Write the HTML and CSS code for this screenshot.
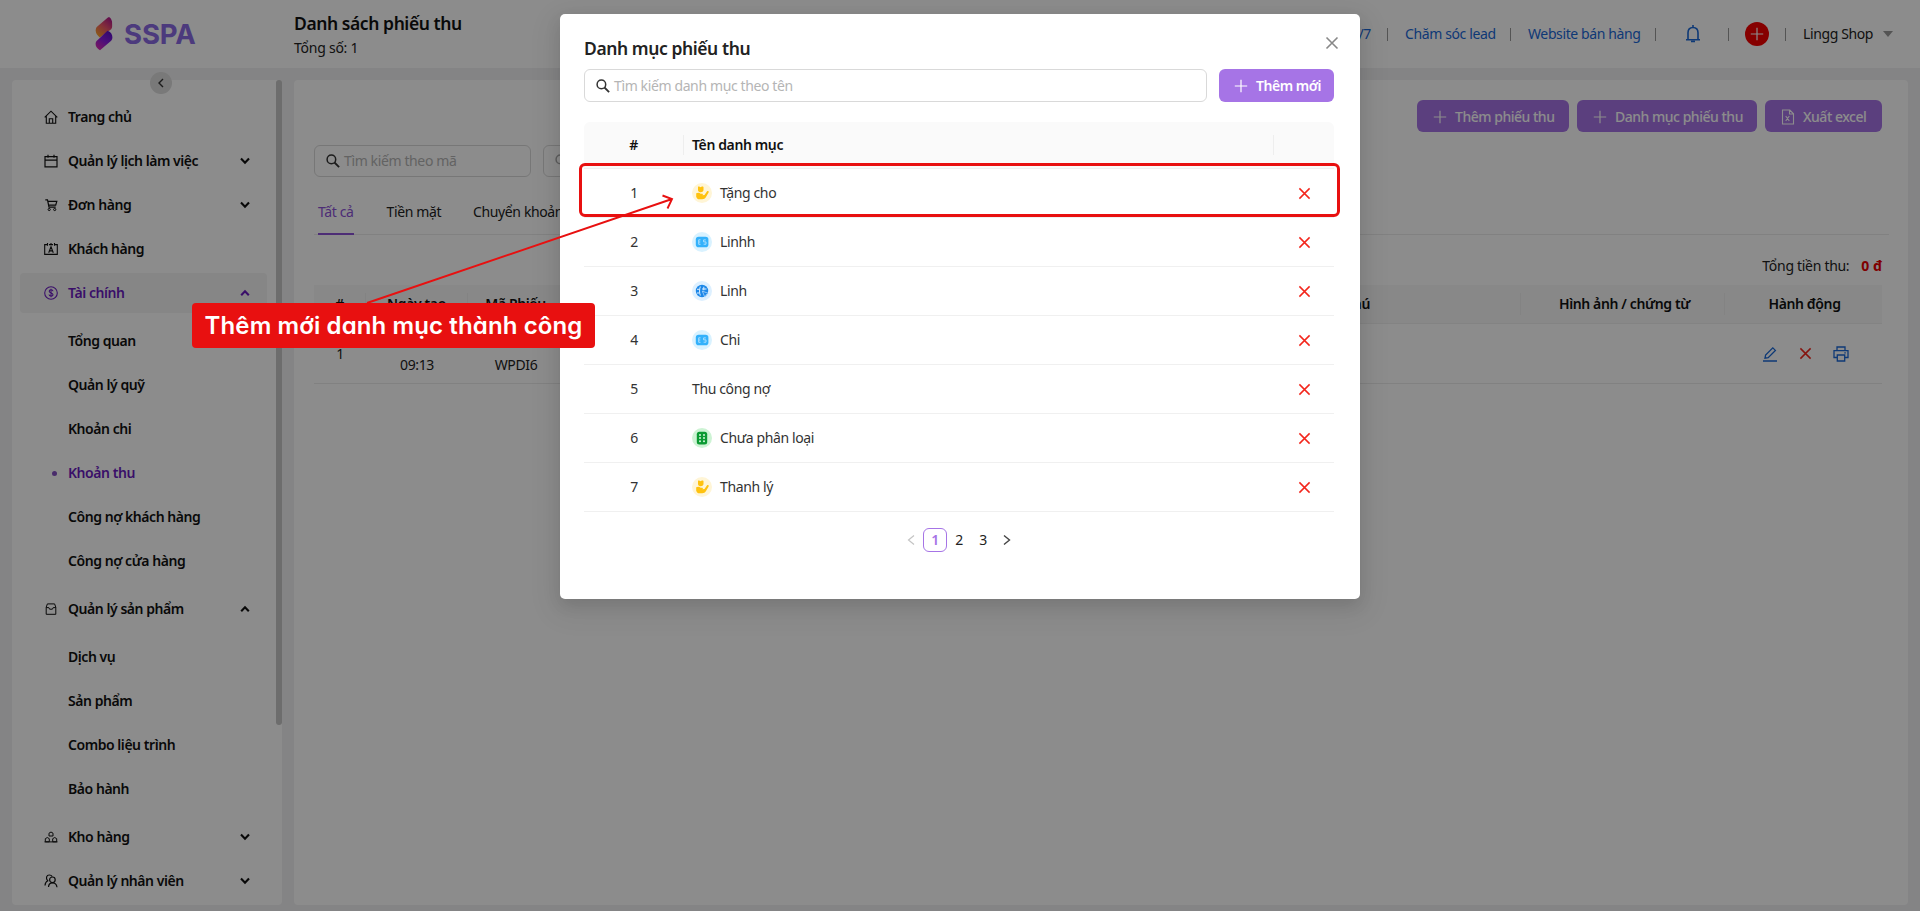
FILE: index.html
```html
<!DOCTYPE html>
<html lang="vi">
<head>
<meta charset="utf-8">
<title>Danh sách phiếu thu</title>
<link rel="stylesheet" href="styles.css">
</head>
<body>
<svg class="defs" width="0" height="0">
  <defs>
    <linearGradient id="g1" x1="0.8" y1="0" x2="0.1" y2="1"><stop offset="0" stop-color="#b0188c"/><stop offset=".45" stop-color="#f0566a"/><stop offset="1" stop-color="#ffae20"/></linearGradient>
    <linearGradient id="g2" x1="0.8" y1="0" x2="0.2" y2="1"><stop offset="0" stop-color="#5a10c8"/><stop offset=".5" stop-color="#8a1be0"/><stop offset="1" stop-color="#e02bb0"/></linearGradient>
  </defs>
  <symbol id="down" viewBox="0 0 10 10"><path d="M1 2.500 5 6.700 9 2.500" fill="none" stroke="currentColor" stroke-width="2.100"/></symbol>
  <symbol id="up" viewBox="0 0 10 10"><path d="M1.200 7.300 5 3.300 8.800 7.300" fill="none" stroke="currentColor" stroke-width="2.100"/></symbol>
  <symbol id="plus" viewBox="0 0 14 14"><path d="M7 .8v12.400M.8 7h12.400" fill="none" stroke="currentColor" stroke-width="1.200"/></symbol>
  <symbol id="x" viewBox="0 0 14 14"><path d="M1.500 1.500l11 11M12.500 1.500l-11 11" fill="none" stroke="currentColor" stroke-width="1.600"/></symbol>
  <symbol id="search" viewBox="0 0 14 14"><circle cx="5.400" cy="5.400" r="4.300" fill="none" stroke="currentColor" stroke-width="1.500"/><path d="M8.500 8.500l4.600 4.600" stroke="currentColor" stroke-width="1.800"/></symbol>
  <symbol id="gift" viewBox="0 0 20 20"><circle cx="10" cy="10" r="10" fill="#fff5d6"/><path d="M6 3.800c.8-.6 1.700-.4 2.500.5.900-.9 2-1.100 3-.4v3.400c-.4 1.300-1.300 2-2.700 2S6.300 8.600 6 7.200z" fill="#ffc20e"/><path d="M4.200 10.300c1.800-1.200 3.400-.6 4.400.4l1.700.1c.8.200.8 1.200 0 1.400l2.200-.3 2.400-3.500c.9-1 2.300-.1 1.700 1.100l-2.600 4.600c-.9 1.500-2.100 2.200-3.800 2.200H7.600c-1.800 0-2.900-1-3.400-2.600z" fill="#ffc20e"/></symbol>
  <symbol id="cash" viewBox="0 0 20 20"><circle cx="10" cy="10" r="10" fill="#d9f2ff"/><rect x="3.800" y="4.800" width="12.600" height="10.400" rx="2.800" fill="#33b1fb"/><path d="M8.500 7.800H6.700v4.500h1.800M6.700 10h1.600M13.800 7.900h-2.200v2H14v2.300h-2.400" fill="none" stroke="#b4e3ff" stroke-width=".9"/></symbol>
  <symbol id="globe" viewBox="0 0 20 20"><circle cx="10" cy="10" r="10" fill="#ddf0ff"/><circle cx="10" cy="10" r="6.200" fill="#1c87e8"/><path d="M8.300 5.500c-1 3-1 6 0 9M5 8.300h2.500M5 12h2.500M11.800 5.800v3.500M10 8h4.500" fill="none" stroke="#ddf0ff" stroke-width="1"/><path d="M10.300 10.100l6.400 2.400-2.600 1.200-1.100 2.900z" fill="#1c87e8" stroke="#ddf0ff" stroke-width=".6"/></symbol>
  <symbol id="dice" viewBox="0 0 20 20"><circle cx="10" cy="10" r="10" fill="#cdf3d4"/><rect x="4.800" y="3.800" width="10.400" height="12.600" rx="2.500" fill="#0a9a32"/><g fill="#d0f5d8"><circle cx="8" cy="7" r="1"/><circle cx="12" cy="7" r="1"/><circle cx="8" cy="10.100" r="1"/><circle cx="12" cy="10.100" r="1"/><circle cx="8" cy="13.200" r="1"/><circle cx="12" cy="13.200" r="1"/></g></symbol>
</svg>

<header class="header">
  <div class="logo">
    <svg width="18" height="34" viewBox="0 0 18 34"><path d="M2.300 9.600 12.600.8c1.500-1 2.600-.2 3.400 1.100.8 1.300 1.100 2.400 1.100 4.300v3.200c0 1.400-.5 2.400-1.600 3.400L4.700 20.600C2.300 18.400.7 16.400.7 13.600c0-1.700.5-2.900 1.600-4z" fill="url(#g1)"/><path d="M12.500 13.800c3.200 1.200 4.900 3.500 4.900 6.500 0 1.700-.6 2.900-1.800 4L5 33.300C2.400 31.600.6 29.800.6 27c0-1.700.5-2.700 1.800-3.800z" fill="url(#g2)"/></svg>
    <span>SSPA</span>
  </div>
  <div class="heading">
    <div class="title">Danh sách phiếu thu</div>
    <div class="subtitle">Tổng số: 1</div>
  </div>
  <nav class="topnav">
    <a class="n1">Hỗ trợ 24/7</a><i></i><a class="n2">Chăm sóc lead</a><i></i><a class="n3">Website bán hàng</a><i></i>
    <span class="bell"><svg width="16" height="20" viewBox="0 0 16 20"><path d="M8 1v2M3 15.500V8.800C3 5.600 5 3.500 8 3.500s5 2.100 5 5.300v6.700M1 15.700h14M6 17.500h4" fill="none" stroke="#1a68d8" stroke-width="1.600"/></svg></span><i></i>
    <span class="add"><svg width="14" height="14"><use href="#plus"/></svg></span><i></i>
    <span class="shop">Lingg Shop</span><b class="caret"></b>
  </nav>
</header>

<div class="body">
  <aside class="sidebar">
    <span class="collapse"><svg width="8" height="10" viewBox="0 0 8 10"><path d="M6 1 2 5l4 4" fill="none" stroke="#333" stroke-width="1.400"/></svg></span>
    <ul class="menu">
      <li><svg class="mi" viewBox="0 0 14 14"><path d="M.7 7.300 7 1.200l6.300 6.100M2.300 6.300v6.900h9.400V6.300M5.300 13V8.700h3.400V13" fill="none" stroke="currentColor" stroke-width="1.100"/></svg><span>Trang chủ</span></li>
      <li><svg class="mi" viewBox="0 0 14 14"><path d="M1 2.600h12v10.200H1zM1 6.100h12M4 .8v3M10 .8v3" fill="none" stroke="currentColor" stroke-width="1.200"/></svg><span>Quản lý lịch làm việc</span><svg class="ar"><use href="#down"/></svg></li>
      <li><svg class="mi" viewBox="0 0 14 14"><path d="M1.300 1.800h2.200l1.500 7.400h6.700M3.700 3.400h9.100l-1.100 3.800H4.500" fill="none" stroke="currentColor" stroke-width="1.200"/><circle cx="5.200" cy="11.500" r="1.100" fill="none" stroke="currentColor"/><circle cx="10.700" cy="11.500" r="1.100" fill="none" stroke="currentColor"/></svg><span>Đơn hàng</span><svg class="ar"><use href="#down"/></svg></li>
      <li><svg class="mi" viewBox="0 0 14 14"><path d="M3.500 2.600H.7v9.800h12.600V2.600h-2.800M5 2.600h4M3.500 1v2.800M7 1v2M10.500 1v2.800M4.700 10.700 7 4.800l2.300 5.900M5.400 8.900h3.200" fill="none" stroke="currentColor" stroke-width="1.100"/></svg><span>Khách hàng</span></li>
      <li class="open"><svg class="mi" viewBox="0 0 14 14"><circle cx="7" cy="7" r="6.300" fill="none" stroke="currentColor" stroke-width="1.100"/><path d="M9 5.300C8.800 3.200 5.200 3.300 5.200 5.300S9 6.800 9 8.700s-3.800 2-4-.2M7 2.800v8.400" fill="none" stroke="currentColor" stroke-width="1.100"/></svg><span>Tài chính</span><svg class="ar"><use href="#up"/></svg></li>
    </ul>
    <ul class="menu sub">
      <li><span>Tổng quan</span></li>
      <li><span>Quản lý quỹ</span></li>
      <li><span>Khoản chi</span></li>
      <li class="active"><em></em><span>Khoản thu</span></li>
      <li><span>Công nợ khách hàng</span></li>
      <li><span>Công nợ cửa hàng</span></li>
    </ul>
    <ul class="menu">
      <li><svg class="mi" viewBox="0 0 14 14"><path d="M2.200 5.200V12.300h9.600V5.200L10.600 1.900H3.400zM2.200 5.600h2.600l.8 1.600h2.800l.8-1.600h2.600" fill="none" stroke="currentColor" stroke-width="1"/></svg><span>Quản lý sản phẩm</span><svg class="ar"><use href="#up"/></svg></li>
    </ul>
    <ul class="menu sub">
      <li><span>Dịch vụ</span></li>
      <li><span>Sản phẩm</span></li>
      <li><span>Combo liệu trình</span></li>
      <li><span>Bảo hành</span></li>
    </ul>
    <ul class="menu">
      <li><svg class="mi" viewBox="0 0 14 14"><path d="M5 6V3.200l2-1.200 2 1.200V6zM1.300 11.800V8.700l2-1.200 2 1.200v3.100zM8.700 11.800V8.700l2-1.200 2 1.200v3.100zM.5 11.900h13" fill="none" stroke="currentColor" stroke-width="1"/></svg><span>Kho hàng</span><svg class="ar"><use href="#down"/></svg></li>
      <li><svg class="mi" viewBox="0 0 14 14"><path d="M1 11.500C1.200 9 2.100 7.500 3.800 6.800 1.200 4 2.700 1 5.300 1c1.400 0 2.300.5 2.900 1.500M4.500 13c.1-2.500 1.400-4 3.800-4.200s4.400 1.700 4.700 4.400" fill="none" stroke="currentColor" stroke-width="1.200"/><circle cx="8.400" cy="5.800" r="2.800" fill="none" stroke="currentColor" stroke-width="1.200"/></svg><span>Quản lý nhân viên</span><svg class="ar"><use href="#down"/></svg></li>
    </ul>
    <span class="scroll"></span>
  </aside>

  <main class="main">
    <div class="actions">
      <button class="btn b1"><svg width="14" height="14"><use href="#plus"/></svg><span>Thêm phiếu thu</span></button>
      <button class="btn b2"><svg width="14" height="14"><use href="#plus"/></svg><span>Danh mục phiếu thu</span></button>
      <button class="btn b3"><svg width="14" height="16" viewBox="0 0 14 16"><path d="M1.500 1h7.300L12.500 4.800V15h-11zM8.500 1v4h4M4.700 7l3.600 5M8.300 7l-3.600 5" fill="none" stroke="currentColor" stroke-width="1.100"/></svg><span>Xuất excel</span></button>
    </div>
    <div class="filters">
      <div class="field"><svg width="14" height="14"><use href="#search"/></svg><span>Tìm kiếm theo mã</span></div>
      <div class="field gray"><svg width="14" height="14"><use href="#search"/></svg></div>
    </div>
    <div class="tabs"><span class="on">Tất cả</span><span>Tiền mặt</span><span>Chuyển khoản</span></div>
    <div class="total">Tổng tiền thu: <strong>0 đ</strong></div>
    <div class="grid head"><div>#</div><div>Ngày tạo</div><div>Mã Phiếu</div><div></div><div>Ghi chú</div><div>Hình ảnh / chứng từ</div><div>Hành động</div></div>
    <div class="grid row"><div>1</div><div>10/10/2024<br>09:13</div><div>PT<br>WPDI6</div><div></div><div></div><div></div>
      <div class="ops">
        <svg width="16" height="16" viewBox="0 0 16 16"><path d="M1 15h14M3 12.200l.6-3.200L10.800 1.800l2.600 2.600-7.200 7.200z" fill="none" stroke="#1a68d8" stroke-width="1.300"/></svg>
        <svg class="red" width="13" height="13"><use href="#x"/></svg>
        <svg width="16" height="16" viewBox="0 0 16 16"><path d="M4 4.500V1h8v3.500M4 11.500H1V4.700h14v6.800h-3M4.300 9h7.400v6H4.300zM11.300 6.800h1.500" fill="none" stroke="#1a68d8" stroke-width="1.300"/></svg>
      </div></div>
  </main>
</div>

<div class="mask">
  <section class="modal">
    <svg class="close" width="14" height="14"><use href="#x"/></svg>
    <h2>Danh mục phiếu thu</h2>
    <div class="tools">
      <div class="field"><svg width="14" height="14"><use href="#search"/></svg><span>Tìm kiếm danh mục theo tên</span></div>
      <button class="btn"><svg width="14" height="14"><use href="#plus"/></svg><span>Thêm mới</span></button>
    </div>
    <div class="list">
      <div class="line lhead"><div>#</div><div>Tên danh mục</div><div></div></div>
      <div class="line"><div>1</div><div><svg class="ic"><use href="#gift"/></svg>Tặng cho</div><div><svg class="red" width="13" height="13"><use href="#x"/></svg></div></div>
      <div class="line"><div>2</div><div><svg class="ic"><use href="#cash"/></svg>Linhh</div><div><svg class="red" width="13" height="13"><use href="#x"/></svg></div></div>
      <div class="line"><div>3</div><div><svg class="ic"><use href="#globe"/></svg>Linh</div><div><svg class="red" width="13" height="13"><use href="#x"/></svg></div></div>
      <div class="line"><div>4</div><div><svg class="ic"><use href="#cash"/></svg>Chi</div><div><svg class="red" width="13" height="13"><use href="#x"/></svg></div></div>
      <div class="line"><div>5</div><div>Thu công nợ</div><div><svg class="red" width="13" height="13"><use href="#x"/></svg></div></div>
      <div class="line"><div>6</div><div><svg class="ic"><use href="#dice"/></svg>Chưa phân loại</div><div><svg class="red" width="13" height="13"><use href="#x"/></svg></div></div>
      <div class="line"><div>7</div><div><svg class="ic"><use href="#gift"/></svg>Thanh lý</div><div><svg class="red" width="13" height="13"><use href="#x"/></svg></div></div>
    </div>
    <div class="pager">
      <span><svg width="8" height="12" viewBox="0 0 8 12"><path d="M7 1.500 1.500 6 7 10.500" fill="none" stroke="#c4c4c4" stroke-width="1.200"/></svg></span><span class="cur">1</span><span>2</span><span>3</span><span><svg width="8" height="12" viewBox="0 0 8 12"><path d="M1 1.500 6.500 6 1 10.500" fill="none" stroke="#444" stroke-width="1.400"/></svg></span>
    </div>
  </section>
</div>

<div class="frame"></div>
<svg class="arrow" width="320" height="120" viewBox="0 0 320 120"><path d="M7 113 312 9M302.500 5.500 312 9l-4.500 9.500" fill="none" stroke="#e81010" stroke-width="1.900"/></svg>
<div class="callout"><span>Thêm mới danh mục thành công</span></div>
</body>
</html>
```
FILE: styles.css
```css
* { box-sizing: border-box; }
body { margin: 0; width: 1920px; height: 911px; overflow: hidden; position: relative; background: #f1f1f2; font: 14px/22px "Noto Sans", "Open Sans", sans-serif; letter-spacing: -0.38px; color: #222; }
ul { list-style: none; margin: 0; padding: 0; }
svg { display: block; flex: none; }
.defs { position: absolute; }

.header { height: 68px; background: #fff; display: flex; align-items: center; }
.logo { width: 294px; padding-left: 95px; display: flex; align-items: center; gap: 11px; font: 700 27.5px/34px Inter, sans-serif; letter-spacing: -0.1px; color: #8a6be4; }
.heading { flex: 1; }
.title { font-size: 17.5px; font-weight: 600; line-height: 26px; letter-spacing: -0.42px; margin-bottom: 1px; color: #111; }
.subtitle { line-height: 22px; letter-spacing: -0.25px; }
.topnav { display: flex; align-items: center; color: #1a68d8; }
.topnav i { width: 1px; height: 13px; background: #999; margin: 0 17px 0 16px; }
.n1, .n2, .n3, .shop { white-space: nowrap; }
.n2 { width: 89px; }
.n3 { width: 111px; }
.bell { width: 39px; display: flex; justify-content: center; }
.add { width: 24px; height: 24px; border-radius: 50%; background: #f50000; color: #fff; display: flex; align-items: center; justify-content: center; }
.topnav .bell + i { margin-right: 16px; }
.topnav .shop { color: #222; width: 69px; }
.caret { border: 5px solid transparent; border-top: 6px solid #999; border-bottom: 0; margin: 0 27px 0 11px; }

.body { display: flex; gap: 12px; padding: 12px; }
.sidebar { width: 270px; height: 825px; background: #fff; border-radius: 4px; position: relative; padding: 17px 15px 0 8px; }
.main { width: 1614px; height: 825px; background: #fff; border-radius: 4px; padding: 20px 26px 0 20px; }
.collapse { position: absolute; left: 138px; top: -8px; width: 22px; height: 22px; border-radius: 50%; background: #dcdcdc; display: flex; align-items: center; justify-content: center; }
.scroll { position: absolute; right: 0; top: 0; width: 6px; height: 645px; background: #c6c6c6; border-radius: 3px; }
.menu li { height: 40px; margin-bottom: 4px; padding-left: 24px; display: flex; align-items: center; font-weight: 600; letter-spacing: -0.45px; color: #111; border-radius: 4px; }
.menu span { flex: 1; }
.mi { width: 14px; height: 14px; margin-right: 10px; }
.ar { width: 10px; height: 10px; margin-right: 17px; }
.menu .open { background: #f4f4f4; color: #6a1bc0; }
.sub { padding: 4px 0; }
.sub li { padding-left: 48px; position: relative; }
.sub .active { color: #6a1bc0; }
.sub em { position: absolute; left: 32px; width: 5px; height: 5px; border-radius: 50%; background: #8650c4; }

.btn { height: 32px; border: 0; border-radius: 6px; background: #a674e6; color: #fff; font: 600 14px/22px "Noto Sans", sans-serif; letter-spacing: -0.48px; display: flex; align-items: center; padding: 0 0 0 16px; gap: 8px; white-space: nowrap; }
.actions { display: flex; justify-content: flex-end; gap: 8px; }
.actions .btn { font-weight: 500; padding-top: 1px; }
.b1 { width: 152px; } .b2 { width: 180px; } .b3 { width: 117px; }
.filters { display: flex; gap: 12px; margin-top: 13px; }
.field { height: 32px; border: 1px solid #d9d9d9; border-radius: 6px; display: flex; align-items: center; padding-left: 11px; gap: 4px; color: #b5b5b5; white-space: nowrap; }
.field svg { color: #333; }
.filters .field { width: 217px; }
.filters .gray svg { color: #aaa; }
.tabs { display: flex; gap: 33px; margin: 13px -7px 0 0; height: 45px; border-bottom: 1px solid #ececec; padding-left: 4px; line-height: 44px; }
.tabs .on { color: #8c52d8; border-bottom: 2px solid #8c52d8; height: 45px; }
.tabs span:nth-child(2) { margin-right: -1px; }
.total { display: flex; justify-content: flex-end; gap: 12px; padding-top: 20px; height: 50px; letter-spacing: -0.3px; }
.total strong { color: #e80000; letter-spacing: 0; }
.grid { display: grid; grid-template-columns: 52px 102px 96px 711px 246px 204px 157px; text-align: center; align-items: center; }
.head { height: 39px; background: #f8f8f8; font-weight: 600; border-bottom: 1px solid #eee; color: #111; }
.head div { border-right: 1px solid #eee; height: 22px; }
.head div:last-child { border: 0; padding-left: 2px; }
.head div:nth-child(5) { padding-right: 104px; }
.head div:nth-child(6) { padding-left: 4px; }
.row { height: 60px; border-bottom: 1px solid #ececec; }
.ops { display: flex; justify-content: center; align-items: center; gap: 21px; padding-left: 3px; }
.red { color: #f3261c; }

.mask { position: absolute; inset: 0; background: rgba(0, 0, 0, 0.45); }
.modal { position: relative; width: 800px; height: 585px; margin: 14px auto 0; background: #fff; border-radius: 5px; padding: 22px 26px 0 24px; box-shadow: 0 6px 16px rgba(0, 0, 0, .1), 0 9px 28px 8px rgba(0, 0, 0, .06); }
.close { position: absolute; right: 21px; top: 22px; color: #888; }
.modal h2 { margin: 0; font-size: 17.5px; font-weight: 600; line-height: 24px; height: 33px; letter-spacing: -0.42px; }
.tools { display: flex; gap: 12px; }
.tools .field { width: 623px; height: 33px; }
.tools .btn { width: 115px; height: 33px; padding-left: 15px; }
.list { margin-top: 20px; }
.line { height: 49px; display: grid; grid-template-columns: 100px 590px 60px; align-items: center; border-bottom: 1px solid #f0f0f0; color: #333; }
.line div { display: flex; align-items: center; }
.line div:first-child, .line div:last-child { justify-content: center; }
.lhead { height: 47px; padding-bottom: 1px; background: #fafafa; border-radius: 6px 6px 0 0; font-weight: 600; color: #111; }
.lhead div { height: 20px; border-right: 1px solid #eee; }
.lhead div:last-child { border: 0; }
.line div:nth-child(2) { padding-left: 8px; }
.ic { width: 20px; height: 20px; margin-right: 8px; }
.pager { display: flex; justify-content: center; margin-top: 16px; }
.pager span { width: 24px; height: 24px; display: flex; align-items: center; justify-content: center; }
.pager .cur { border: 1px solid #a674e6; border-radius: 6px; color: #a674e6; font-weight: 600; }

.frame { position: absolute; left: 579px; top: 163px; width: 761px; height: 54px; border: 3px solid #e81010; border-radius: 6px; }
.arrow { position: absolute; left: 360px; top: 190px; }
.callout { position: absolute; left: 192px; top: 303px; width: 403px; height: 45px; background: #e81010; border-radius: 4px; color: #fff; font: 600 24px/45px Inter, sans-serif; font-feature-settings: "cv11"; letter-spacing: 0.12px; text-align: center; white-space: nowrap; }
```
